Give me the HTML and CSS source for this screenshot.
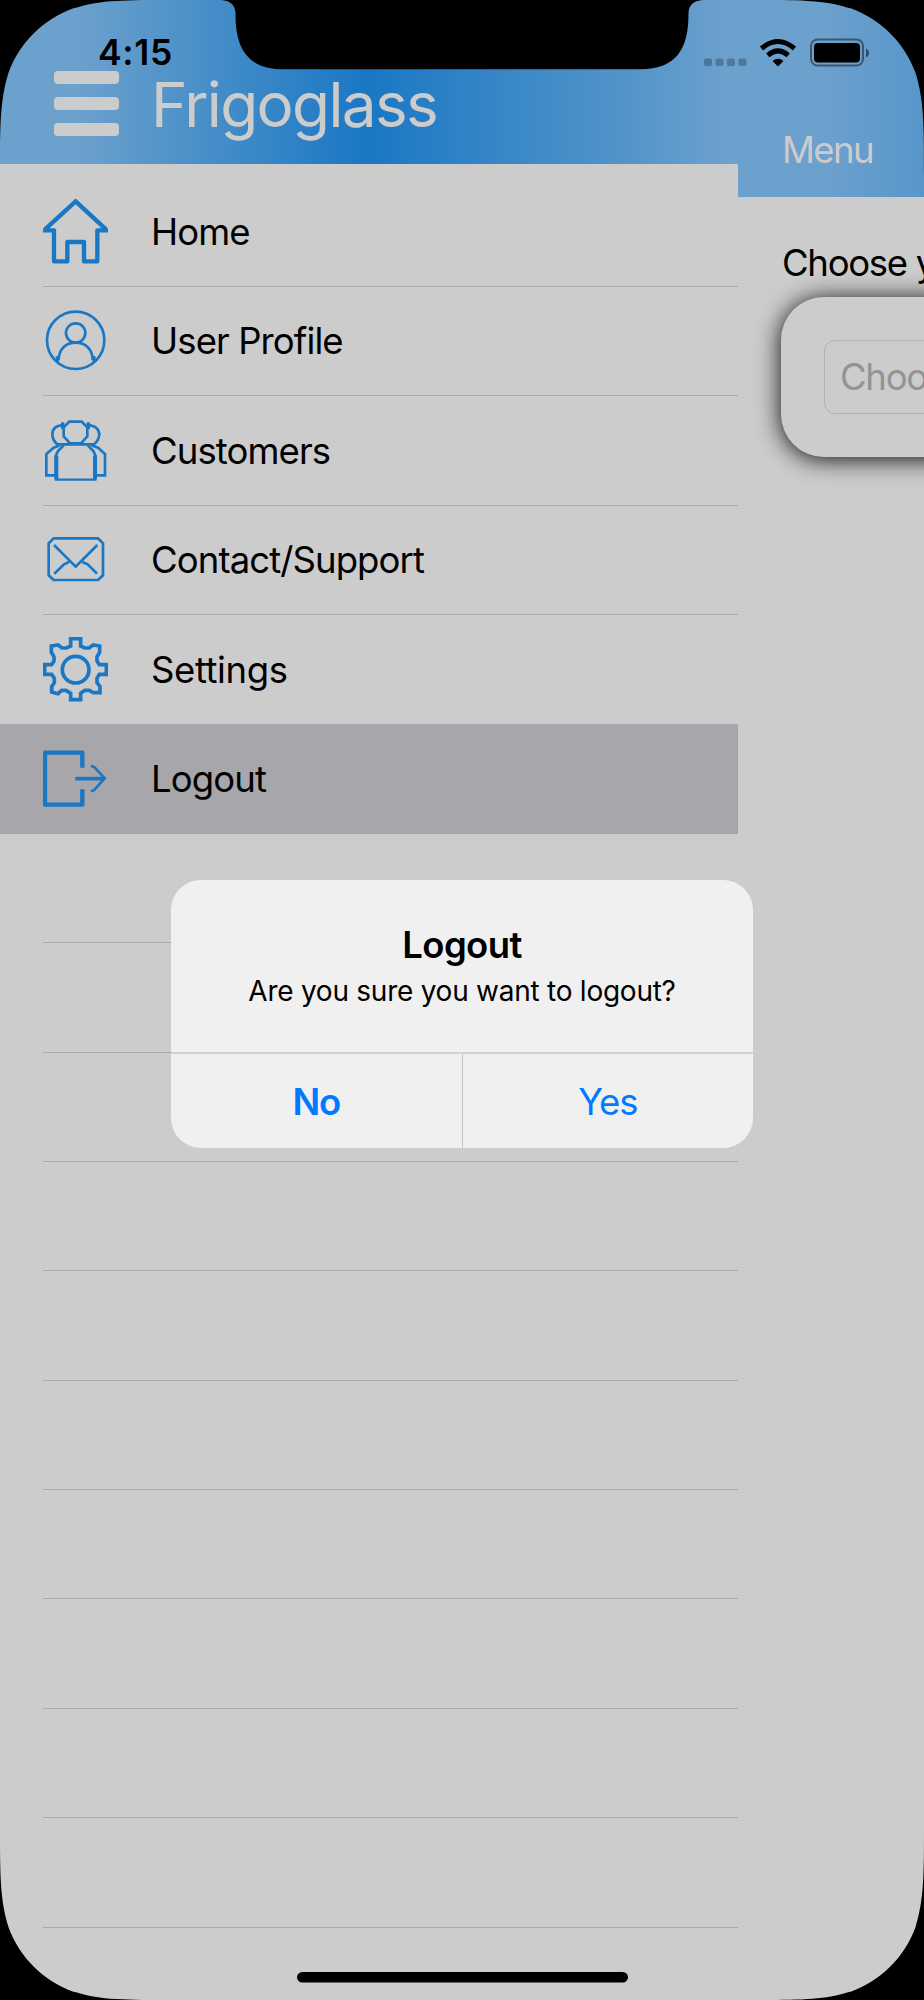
FILE: index.html
```html
<!DOCTYPE html>
<html lang="en">
<head>
<meta charset="utf-8">
<title>Frigoglass</title>
<link rel="stylesheet" href="styles.css">
</head>
<body>
<div class="phone">
  <aside class="drawer">
    <header class="drawer-header">
      <div class="burger"><i></i><i></i><i></i></div>
      <h1 class="brand"><span>Frigoglass</span></h1>
    </header>
    <ul class="menu">
      <li class="item">
        <svg class="icon" viewBox="39 57 195 195"><g stroke-width="13"><path stroke-linejoin="round" d="M39 151H72V244H112V186H162V244H202V151H234"/><path d="M45 148L137 64L228 148"/></g></svg>
        <span class="label">Home</span>
      </li>
      <li class="item">
        <svg class="icon" viewBox="39 385 195 195"><circle cx="137" cy="482" r="86"/><circle cx="137" cy="460" r="29"/><path d="M86 541C86 508 108 489 137 489S188 508 188 541"/><path d="M82 530V546M192 530V546" stroke-width="10"/></svg>
        <span class="label">User Profile</span>
      </li>
      <li class="item">
        <svg class="icon" viewBox="39 53 195 195"><path d="M118 64H155L172 81V108L153 129H120L101 108V81Z"/><path d="M101 74Q67 76 67 102Q68 121 82 132H192Q206 121 208 102Q206 76 172 74"/><path d="M98 66V86M175 66V86" stroke-width="10"/><path d="M90 135L71 142L49 161V225H76M184 135L204 142L225 161V225H198"/><path d="M78 238V165L84 152L101 135M196 238V165L190 152L173 135"/><path d="M78 166V238H196V166" stroke-width="7"/><path d="M79 166V235M195 166V235" stroke-width="12"/></svg>
        <span class="label">Customers</span>
      </li>
      <li class="item">
        <svg class="icon" viewBox="39 381 195 195"><path d="M71 415H204L219 430V526L204 540H71L56 526V430Z"/><path d="M72 435L137 500L202 435M73 521L102 493L117 486M201 521L173 493L157 486" stroke-width="8"/></svg>
        <span class="label">Contact/Support</span>
      </li>
      <li class="item before-selected">
        <svg class="icon" viewBox="39 49 195 195"><path stroke-width="11" d="M122 54H152V76L164 82H177L190 73L209 76V95L201 108V121L208 132H229V161H208L201 173V186L210 198V216H190L178 209H165L152 218V237H122V218L108 209H95L84 219L65 214V198L73 186V173L65 161H44V132H65L72 121V108L64 95V76L84 73L96 82H109L122 76Z"/><circle cx="137" cy="147" r="40" stroke-width="11"/></svg>
        <span class="label wide">Settings</span>
      </li>
      <li class="item selected">
        <svg class="icon" viewBox="39 377 195 195"><path stroke-width="13" stroke-linejoin="round" d="M157 442V397H45V553H157V507"/><path d="M136 475H224" stroke-width="11"/><path stroke-width="8" d="M183 436L193 440L224 474L193 509L183 513"/></svg>
        <span class="label">Logout</span>
      </li>
      <li class="item"></li><li class="item"></li><li class="item"></li><li class="item"></li><li class="item"></li>
      <li class="item"></li><li class="item"></li><li class="item"></li><li class="item"></li><li class="item"></li>
    </ul>
  </aside>
  <main class="page">
    <header class="page-header"><span>Menu</span></header>
    <p class="prompt">Choose your</p>
    <section class="card"><div class="field">Choose</div></section>
  </main>

  <div class="status">
    <span class="time">4:15</span>
    <svg class="signals" width="170" height="40" viewBox="0 0 170 40">
      <g fill="#000" fill-opacity=".25"><rect x="0" y="20.500" width="8" height="7.500" rx="2"/><rect x="11.500" y="20.500" width="8" height="7.500" rx="2"/><rect x="23" y="20.500" width="8" height="7.500" rx="2"/><rect x="34.500" y="20.500" width="8" height="7.500" rx="2"/></g>
      <g fill="none" stroke="#000" stroke-width="5"><path d="M57.500 10.500Q74 -3.500 90.500 10.500"/><path d="M63.800 17.300Q74 8.500 84.200 17.300"/></g>
      <path d="M68.500 23Q74 18.500 79.500 23L74 28.500Z"/>
      <rect x="107" y="1.500" width="52" height="26" rx="6.500" fill="none" stroke="#000" stroke-opacity=".45" stroke-width="2"/>
      <rect x="110" y="5" width="46" height="19.500" rx="4"/>
      <path d="M162 10.500Q165 12 165 15T162 19.500Z" fill-opacity=".5"/>
    </svg>
  </div>

  <div class="alert" role="alertdialog">
    <div class="alert-body">
      <h2 class="alert-title"><span>Logout</span></h2>
      <p class="alert-text"><span>Are you sure you want to logout?</span></p>
    </div>
    <div class="alert-actions">
      <button class="action primary">No</button>
      <button class="action">Yes</button>
    </div>
  </div>

  <svg class="bezel" width="924" height="2000" viewBox="0 0 924 2000">
    <defs><path id="corner" d="M0 0H176C125 0 100 0 77 7.500L72.600 8.600C43 19.500 19.500 43 8.600 72.600C0 100 0 125 0 176Z"/></defs>
    <use href="#corner"/>
    <use href="#corner" transform="translate(924 0) scale(-1 1)"/>
    <use href="#corner" transform="translate(0 2000) scale(1 -1)"/>
    <use href="#corner" transform="translate(924 2000) scale(-1 -1)"/>
    <path d="M221 0C231 1 235.500 5 235.500 14C235.500 48 247 69.300 284 69.300H640C677 69.300 688.500 48 688.500 14C688.500 5 693 1 703 0Z"/>
    <rect x="297" y="1972" width="331" height="10.500" rx="5.250"/>
  </svg>
</div>
</body>
</html>
```

FILE: styles.css
```css
* { box-sizing: border-box; }
body { margin: 0; background: #000; }
.phone {
  position: relative;
  display: flex;
  width: 924px;
  height: 2000px;
  overflow: hidden;
  background: #ccc;
  font-family: Inter, "Liberation Sans", sans-serif;
  font-size: 36.5px;
  letter-spacing: -0.9px;
  color: #000;
}
.drawer { width: 738px; flex: none; }
.drawer-header {
  display: flex;
  align-items: flex-start;
  height: 164px;
  padding: 71px 0 0 54px;
  background: linear-gradient(90deg, #6ca0cd 0, #6ca0cd 80px, #5a98ca 140px, #1a77c4 368px, #2f82c6 460px, #5395ca 630px, #6ca0cd 725px);
}
.burger { display: flex; flex-direction: column; gap: 13px; width: 65px; }
.burger i { height: 13px; border-radius: 4px; background: #ccc; }
.brand {
  margin: -4px 0 0 32px;
  font-size: 62px;
  line-height: 75px;
  font-weight: 400;
  letter-spacing: -1.65px;
  color: #ccc;
}
.menu { margin: 0; padding: 13.400px 0 0; list-style: none; }
.item {
  display: flex;
  align-items: center;
  height: 109.4px;
  margin-left: 43px;
  border-bottom: 1px solid #a9a9ab;
}
.item.before-selected { border-color: transparent; }
.item.selected {
  margin-left: 0;
  padding-left: 43px;
  background: #a7a6ab;
  border-color: #a7a6ab;
}
.label { padding-top: 1px; }
.label.wide { letter-spacing: -0.4px; }
.icon { width: 65px; height: 65px; margin-right: 43px; fill: none; stroke: #1a77c4; stroke-width: 8; }
.page { flex: 1; min-width: 0; overflow: hidden; }
.page-header {
  height: 197px;
  padding: 126.500px 0 0 44px;
  line-height: 46px;
  letter-spacing: -1.6px;
  color: #ccc;
  background: linear-gradient(90deg, #6ca0cd 0, #6ca0cd 90px, #5896ca 186px);
}
.prompt { margin: 43px 0 0 44px; line-height: 46px; letter-spacing: -1.3px; white-space: nowrap; }
.card {
  width: 320px;
  height: 160px;
  margin: 10.500px 0 0 43px;
  padding: 43px;
  border-radius: 43px;
  background: #ccc;
  box-shadow: 0 2px 24px rgba(0, 0, 0, .95);
}
.field {
  height: 74px;
  padding-left: 15px;
  border: 1px solid #b2b2b2;
  border-radius: 11px;
  line-height: 73px;
  letter-spacing: -1.3px;
  color: #939393;
}
.status {
  position: absolute;
  inset: 36px 0 auto 98px;
  display: flex;
  justify-content: space-between;
}
.time { font-size: 35.5px; line-height: 34px; font-weight: 600; letter-spacing: 0.7px; }
.signals { margin: 2px 50px 0 0; }
.alert {
  position: absolute;
  left: 171px;
  top: 880px;
  width: 582px;
  height: 268px;
  display: flex;
  flex-direction: column;
  border-radius: 30px;
  overflow: hidden;
  background: #f0f0f0;
  text-align: center;
}
.alert-body { height: 172px; padding-top: 42px; }
.alert-title { margin: 0; font-size: 36.5px; line-height: 46px; font-weight: 600; letter-spacing: -0.6px; }
.alert-text { margin: 5px 0 0; font-size: 28px; line-height: 36px; letter-spacing: -0.25px; }
.alert-actions { display: flex; flex: 1; border-top: 2px solid #d2d2d2; }
.action {
  flex: 1;
  padding: 1px 0 0;
  border: 0;
  background: none;
  font: inherit;
  letter-spacing: -1.2px;
  color: #007aff;
}
.action.primary { border-right: 1px solid #c4c4c4; font-weight: 600; }
.bezel { position: absolute; inset: 0; }
```
